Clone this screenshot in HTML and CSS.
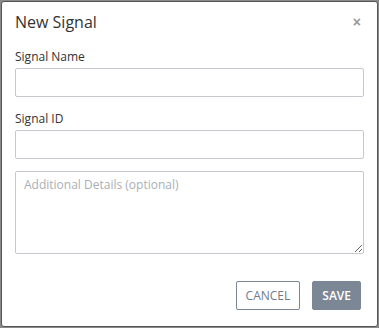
FILE: index.html
```html
<!DOCTYPE html>
<html lang="en">
<head>
  <meta charset="UTF-8">
  <title>New Signal</title>
  <link rel="stylesheet" href="styles.css">
</head>
<body>
  <div class="frame">
    <div class="modal">
      <div class="modal-header">
        <h2>New Signal</h2>
        <button class="close" aria-label="Close">&times;</button>
      </div>

      <div class="modal-body">
        <div class="field">
          <label for="signalName">Signal Name</label>
          <input type="text" id="signalName">
        </div>
        <div class="field">
          <label for="signalId">Signal ID</label>
          <input type="text" id="signalId">
        </div>
        <div class="field">
          <textarea placeholder="Additional Details (optional)"></textarea>
        </div>
      </div>

      <div class="modal-footer">
        <button class="btn btn-secondary">Cancel</button>
        <button class="btn btn-primary">Save</button>
      </div>
    </div>
  </div>
</body>
</html>
```

FILE: styles.css
```css
body {
  margin: 0;
  font-family: 'Open Sans', 'Liberation Sans', sans-serif;
  color: #333;
}

.frame {
  width: 379px;
  height: 328px;
  box-sizing: border-box;
  border: 1px solid #8a8a8a;
  background: #8a8a8a;
}

.modal {
  height: 100%;
  box-sizing: border-box;
  border: 1px solid #555;
  border-radius: 3px;
  background: white;
  display: flex;
  flex-direction: column;
  padding: 0 13px 0 13px;
}

.modal-header {
  display: flex;
  justify-content: space-between;
  align-items: center;
  padding-top: 9px;
}

.modal-header h2 {
  margin: 0;
  font-size: 16px;
  font-weight: 400;
  line-height: 22px;
}

.close {
  border: none;
  background: none;
  padding: 0;
  margin-right: 3px;
  font-size: 14px;
  font-weight: 700;
  line-height: 14px;
  color: #999;
  cursor: pointer;
}

.modal-body {
  padding-top: 14px;
}

.field {
  display: flex;
  flex-direction: column;
  margin-bottom: 12px;
}

.field label {
  font-size: 12px;
  line-height: 16px;
  margin: 2px 0 3px 0;
}

.field input,
.field textarea {
  width: 100%;
  box-sizing: border-box;
  height: 29px;
  border: 1px solid #c5c9cd;
  border-radius: 2px;
  font-family: inherit;
  font-size: 12px;
  padding: 4px 8px;
  margin: 0;
}

.field textarea {
  height: 83px;
  resize: vertical;
}

.field textarea::placeholder {
  color: #a9afb5;
}

.modal-footer {
  display: flex;
  justify-content: flex-end;
  gap: 12px;
  margin-top: auto;
  padding: 0 3px 16px 0;
}

.btn {
  height: 29px;
  padding: 0 9px;
  border-radius: 2px;
  font-family: inherit;
  font-size: 12px;
  text-transform: uppercase;
  cursor: pointer;
}

.btn-secondary {
  background: white;
  color: #6e7b87;
  border: 1px solid #7b8794;
}

.btn-primary {
  background: #7b8794;
  color: white;
  border: 1px solid #7b8794;
  font-weight: 600;
}
```
